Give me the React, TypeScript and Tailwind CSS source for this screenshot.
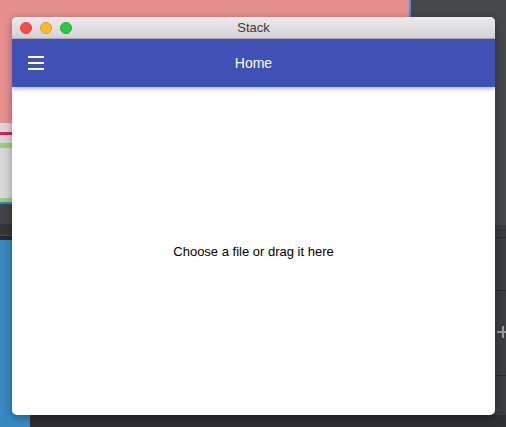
function Lights() {
  return (
    <div className="flex gap-[8px] pl-[8px]">
      <div className="w-[12px] h-[12px] rounded-full bg-[#fc4a47] border border-[#e0403c]" />
      <div className="w-[12px] h-[12px] rounded-full bg-[#fdb928] border border-[#e0a020]" />
      <div className="w-[12px] h-[12px] rounded-full bg-[#29c940] border border-[#20b035]" />
    </div>
  );
}

function MenuIcon() {
  return (
    <div className="flex flex-col gap-[4px]">
      <div className="w-[16px] h-[2px] bg-white" />
      <div className="w-[16px] h-[2px] bg-white" />
      <div className="w-[16px] h-[2px] bg-white" />
    </div>
  );
}

function PlusIcon() {
  return (
    <svg width="12" height="12" viewBox="0 0 12 12" className="shrink-0">
      <path d="M0 6h12M6 0v12" stroke="#9a9b9d" strokeWidth="2" />
    </svg>
  );
}

export default function App() {
  return (
    <div className="relative w-[506px] h-[427px] overflow-hidden bg-[#47484a] font-['Liberation_Sans',Arial,sans-serif]">
      {/* desktop behind the window */}
      <div className="absolute inset-0 flex">
        <div className="w-[40px] flex flex-col">
          <div className="h-[123px] bg-[#e78f8e]" />
          <div className="h-[9px] bg-[#d8d8d8]" />
          <div className="h-[3px] bg-[#d81b60]" />
          <div className="h-[8px] bg-[#d8d8d8]" />
          <div className="h-[5px] bg-[#97d36d]" />
          <div className="h-[50px] bg-[#d8d8d8]" />
          <div className="h-[4px] bg-[#97d36d]" />
          <div className="h-[2px] bg-[#3b7fd4]" />
          <div className="h-[20px] bg-[#434447]" />
          <div className="h-[11px] bg-[#363739]" />
          <div className="h-[5px] bg-[#2a2b2d] border-t border-[#4a4b4d]" />
          <div className="flex-1 flex">
            <div className="w-[30px] bg-[#3789bf]" />
            <div className="flex-1 flex flex-col justify-end">
              <div className="h-[12px] bg-[#2e2f31]" />
            </div>
          </div>
        </div>
        <div className="flex-1 flex flex-col">
          <div className="h-[123px] flex">
            <div className="w-[369px] bg-[#e78f8e]" />
            <div className="w-[2px] h-[24px] bg-[#3b8ff0]" />
          </div>
          <div className="flex-1" />
          <div className="h-[12px] bg-[#2e2f31]" />
        </div>
        <div className="w-[26px] flex flex-col">
          <div className="h-[225px]" />
          <div className="h-[12px] bg-[#3a3b3d]" />
          <div className="h-[53px] bg-[#3c3d3f] border-t border-[#2a2b2d]" />
          <div className="h-[85px] bg-[#3c3d3f] border-t border-[#2a2b2d] flex items-center pl-[17px] pb-[2px]">
            <PlusIcon />
          </div>
          <div className="flex-1 bg-[#3c3d3f] border-t border-[#2a2b2d]" />
          <div className="h-[12px] bg-[#2e2f31]" />
        </div>
      </div>

      {/* window */}
      <div className="absolute left-[12px] top-[17px] w-[483px] h-[398px] rounded-[5px] overflow-hidden bg-white flex flex-col shadow-[0_2px_10px_rgba(0,0,0,0.35)]">
        <div className="h-[22px] shrink-0 grid grid-cols-[1fr_auto_1fr] items-center bg-gradient-to-b from-[#ebe9eb] to-[#d4d2d4] border-b border-[#b3b1b3]">
          <Lights />
          <span className="text-[13px] text-[#3a3a3a] leading-none">Stack</span>
          <div />
        </div>
        <div className="relative z-10 h-[48px] shrink-0 bg-[#3f51b5] grid grid-cols-[1fr_auto_1fr] items-center px-[16px] shadow-[0_2px_4px_rgba(0,0,0,0.3)]">
          <MenuIcon />
          <span className="text-[14px] text-white">Home</span>
          <div />
        </div>
        <div className="flex-1 flex items-center justify-center pt-[2px]">
          <span className="text-[13px] text-black">Choose a file or drag it here</span>
        </div>
      </div>
    </div>
  );
}
